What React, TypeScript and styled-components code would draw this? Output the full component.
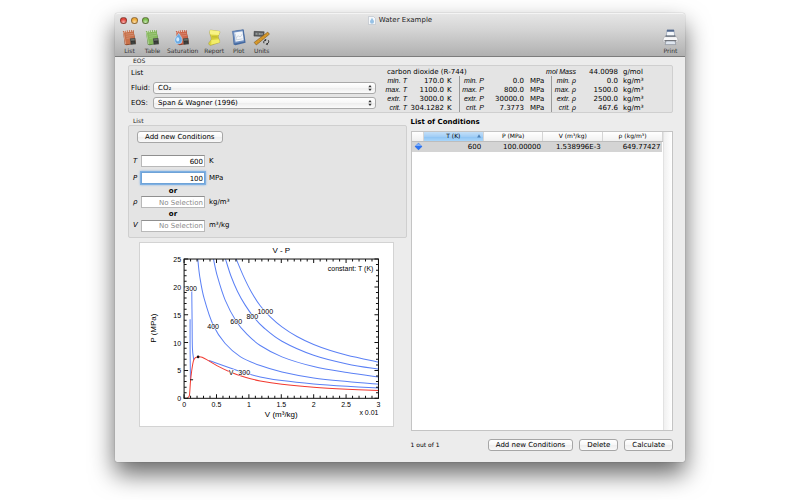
import React from "react";
import styled, { createGlobalStyle, css } from "styled-components";

const GlobalStyle = createGlobalStyle`
  *, *::before, *::after { box-sizing: border-box; }
  body {
    margin: 0;
    background: #fff;
    color: #000;
    font: 7px/9px "DejaVu Sans", sans-serif;
  }
  button, input, select { font: inherit; color: inherit; margin: 0; }
`;

const Desktop = styled.div`
  display: flex;
  min-height: 100vh;
  padding: 13px 115px 38px;
  overflow: hidden;
`;

const Window = styled.div`
  flex: 1;
  min-width: 0;
  display: flex;
  flex-direction: column;
  background: #ececec;
  border-radius: 3px 3px 2px 2px;
  box-shadow: 0 12px 24px rgba(0, 0, 0, 0.6), 0 0 1px rgba(0, 0, 0, 0.5);
`;

const Chrome = styled.header`
  background: linear-gradient(#e6e6e6, #d3d3d3 40%, #b0b0b0);
  border-top: 1px solid #f4f4f4;
  border-bottom: 1px solid #7c7c7c;
  border-radius: 3px 3px 0 0;
`;

const TitleBar = styled.div`
  display: grid;
  grid-template-columns: 1fr auto 1fr;
  align-items: center;
  height: 13px;
  padding: 0 5px;
`;

const Lights = styled.div`
  display: flex;
  gap: 4px;
`;

const Light = styled.button<{ $tone: string }>`
  width: 7px;
  height: 7px;
  padding: 0;
  border: 1px solid rgba(60, 40, 30, 0.5);
  border-radius: 50%;
  background: radial-gradient(circle at 50% 85%, #fff9, transparent 60%), ${(p) => p.$tone};
`;

const Title = styled.h1`
  display: flex;
  align-items: center;
  gap: 3px;
  margin: 0;
  font-size: 7px;
  font-weight: 400;
  color: #222;
`;

const ToolBar = styled.nav`
  display: flex;
  gap: 6px;
  padding: 1px 6px 1px 6px;
`;

const Tool = styled.button<{ $end?: boolean }>`
  display: flex;
  flex-direction: column;
  align-items: center;
  min-width: 17px;
  padding: 0;
  border: 0;
  background: none;
  font-size: 6px;
  line-height: 8px;
  color: #333;
  svg { width: 17px; height: 19px; }
  ${(p) => p.$end && css`margin-left: auto;`}
`;

const Content = styled.main`
  flex: 1;
  display: flex;
  flex-direction: column;
  padding: 0 12px 11px 13px;
`;

const BoxLabel = styled.h2`
  margin: 0;
  padding-left: 5px;
  font-size: 6px;
  line-height: 8px;
  font-weight: 400;
  color: #222;
`;

const Box = styled.section`
  border: 1px solid #cfcfcf;
  border-radius: 2px;
  background: #e4e4e4;
`;

const EosBox = styled(Box)`
  display: flex;
  align-items: flex-start;
  gap: 4px;
  padding: 1px 3px 0 2px;
`;

const FluidForm = styled.div`
  flex: 1;
  display: flex;
  flex-direction: column;
  gap: 3px;
  padding-bottom: 3px;
`;

const Heading = styled.h3`
  margin: 0;
  font-size: 7px;
  line-height: 12px;
  font-weight: 400;
`;

const Field = styled.div`
  display: grid;
  grid-template-columns: 22px 1fr;
  align-items: center;
`;

const SelectWrap = styled.div`
  position: relative;
  display: flex;
`;

const Select = styled.select`
  width: 100%;
  height: 12px;
  padding: 0 4px;
  appearance: none;
  border: 1px solid #a9a9a9;
  border-radius: 3px;
  background: linear-gradient(#fff, #f6f6f6 50%, #ededed 51%, #fbfbfb);
`;

const SelectArrows = styled.svg`
  position: absolute;
  right: 4px;
  top: 3px;
  pointer-events: none;
`;

const Facts = styled.table`
  width: 289px;
  table-layout: fixed;
  border-collapse: collapse;
`;

const FactName = styled.th`
  padding: 0;
  height: 9px;
  text-align: right;
  font: italic 400 7px/9px "Liberation Sans", sans-serif;
`;

const FactTitle = styled.th`
  padding: 1px 0 0 7px;
  line-height: 8px;
  text-align: left;
  font-weight: 400;
  white-space: nowrap;
`;

const FactValue = styled.td`
  padding: 1px 0 0;
  line-height: 8px;
  text-align: right;
`;

const FactUnit = styled.td<{ $rule?: boolean; $inset: number }>`
  padding: 1px 0 0 ${(p) => p.$inset}px;
  line-height: 8px;
  ${(p) => p.$rule && css`border-right: 1px solid #999;`}
`;

const Columns = styled.div`
  flex: 1;
  display: grid;
  grid-template-columns: 278fr 262fr;
  gap: 4px;
  padding-top: 4px;
`;

const LeftColumn = styled.div`
  min-width: 0;
`;

const RightColumn = styled.div`
  min-width: 0;
  display: flex;
  flex-direction: column;
`;

const ConditionBox = styled(Box)`
  padding: 5px 4px 3px;
`;

const PushButton = styled.button`
  height: 12px;
  padding: 0 7px;
  border: 1px solid #a6a6a6;
  border-radius: 3px;
  background: linear-gradient(#fff, #f7f7f7 50%, #eee 51%, #f9f9f9);
  line-height: 10px;
  white-space: nowrap;
`;

const FormTop = styled.div`
  display: flex;
  padding: 0 0 12px 4px;
`;

const InputGrid = styled.div`
  display: grid;
  grid-template-columns: 8px 64px 1fr;
  grid-template-rows: 12px 22px 4px 18px 6px 17px;
  align-items: center;
`;

const Symbol = styled.label`
  grid-column: 1;
  font-style: italic;
`;

const Unit = styled.span`
  padding-left: 4px;
`;

const Or = styled.strong`
  grid-column: 2;
  text-align: center;
`;

const TextBox = styled.input<{ $active?: boolean }>`
  width: 100%;
  height: 12px;
  padding: 1px 1px 0;
  border: 1px solid #b9b9b9;
  border-top-color: #8f8f8f;
  border-radius: 0;
  outline: none;
  background: #fff;
  text-align: right;
  &::placeholder { color: #8a8a8a; opacity: 1; }
  ${(p) =>
    p.$active &&
    css`
      border-color: #6ea3d8;
      box-shadow: 0 0 0 1px #7fb0e2, 0 0 2px 1px #8ab8e6;
    `}
`;

const PlotPanel = styled.figure`
  margin: 4px 13px 0 11px;
  border: 1px solid #d3d3d3;
  background: #fff;
  svg { display: block; width: 100%; height: auto; }
`;

const ListTitle = styled.h2`
  margin: 0;
  font-size: 7px;
  line-height: 11px;
  font-weight: 700;
`;

const ListFrame = styled.div`
  flex: 1;
  display: grid;
  grid-template-columns: minmax(0, 1fr) 9px;
  margin-top: 3px;
  border: 1px solid #c4c4c4;
  background: #fff;
`;

const ScrollTrack = styled.div`
  border-left: 1px solid #e2e2e2;
  background: linear-gradient(90deg, #f0f0f0, #fff);
`;

const Conditions = styled.table`
  width: 100%;
  align-self: start;
  table-layout: fixed;
  border-collapse: collapse;
`;

const MarkerColumn = styled.col`
  width: 12px;
`;

const HeadCell = styled.th<{ $sorted?: boolean }>`
  position: relative;
  height: 9px;
  padding: 0;
  border-right: 1px solid #d5d5d5;
  border-bottom: 1px solid #bdbdbd;
  background: ${(p) =>
    p.$sorted ? "linear-gradient(#c3dff8, #a3cef5 50%, #8cc2f3 51%, #a9d6fa)" : "linear-gradient(#fff, #f0f0f0)"};
  font-size: 6px;
  line-height: 8px;
  font-weight: 400;
`;

const SortMark = styled.svg`
  position: absolute;
  right: 2px;
  top: 2px;
`;

const Cell = styled.td`
  height: 11px;
  padding: 1px 2px 0 0;
  background: #d4d4d4;
  text-align: right;
`;

const MarkerCell = styled(Cell)`
  padding: 0 0 0 2px;
  text-align: left;
  svg { display: block; }
`;

const Footer = styled.footer`
  display: flex;
  align-items: center;
  gap: 6px;
  margin-top: 8px;
`;

const Count = styled.span`
  margin-right: auto;
  font-size: 6px;
  line-height: 8px;
`;

const Notebook = ({ tone, edge, drop }: { tone: string; edge: string; drop?: boolean }) => (
  <svg viewBox="0 0 18 19" aria-hidden="true">
    <path d="M2 3 13 1.600l3 14.200L6 17.600 4 17z" fill={edge} />
    <path d="M2 3 13 1.600l2.400 13.600L4.600 17z" fill={tone} />
    <path d="M2.400 3.500 4.900 16.400" stroke="#fff" strokeOpacity=".45" strokeWidth=".8" />
    <path d="M4 2.200v2M6 2v2M8 1.700v2M10 1.500v2M12 1.200v2" stroke="#f3f3f3" strokeWidth=".8" />
    <path d="m5 6 8-.9M5.400 8.200l8-.9M5.800 10.400l4-.5" stroke="#fff" strokeOpacity=".3" strokeWidth=".7" />
    <path d="m9.400 10.600 5.700-.6.7 6.600-5.600.7z" fill="#4a4d4a" />
    <path d="m10.300 11.500 4-.4.1 1.300-4 .4z" fill="#6f776e" />
    <path d="m10.700 14 3.900-.4m-3.700 1.900 3.900-.4" stroke="#222" strokeDasharray=".9 .5" />
    {drop && (
      <>
        <path d="M5 5c2 3 3.600 5 3.600 7.400a3.900 3.900 0 0 1-7.800 0C.8 10 3.200 8 5 5z" fill="#68a9e4" stroke="#c9e2f7" strokeWidth=".6" />
        <ellipse cx="4" cy="11.500" rx="1.600" ry="2.200" fill="#e4f3ff" opacity=".85" />
      </>
    )}
  </svg>
);

const ReportIcon = () => (
  <svg viewBox="0 0 18 19" aria-hidden="true">
    <path d="m4.500 1.600 10 1.400c.8 2-1.600 3.600-1.500 5.600.1 2.400 2 3.400 1.400 6.200L4.600 18c-1.700-1-2-1.800-1.600-2.800.7-1.600 2.800-2.400 2.500-5C5.200 7.600 2.900 5 4.500 1.600z" fill="#dcd53f" stroke="#9d9633" strokeWidth=".5" />
    <path d="m4.500 1.600 10 1.400c.3 1.400-.5 2.600-.9 3.800L4.800 6.400C3.900 4.800 3.900 3.200 4.500 1.600z" fill="#f8f385" />
    <path d="m5.400 12.500 8-1.100c.9 1.100 1.200 2.200.9 3.300l-9 2.300c.6-1.200.5-3 .1-4.500z" fill="#f3ed68" />
    <path d="m6.200 8.400 5.900-.1m-5.700 1.700 5.900-.4" stroke="#b3a927" strokeWidth=".6" />
  </svg>
);

const PlotIcon = () => (
  <svg viewBox="0 0 18 19" aria-hidden="true">
    <path d="M3 3 14.500 1l2 14-10.800 2.700L3.800 17z" fill="#456ba3" />
    <path d="M2.400 2.900 13.800 1.200l1.600 12.900L4.600 16.200z" fill="#7292c3" stroke="#3c5e92" strokeWidth=".4" />
    <path d="m4.500 4.100 8.800-1.300 1.200 9.600-8.600 1.500z" fill="#f4f7fb" />
    <path d="M5.600 5.400 6.600 12l6.700-1.100M6.700 10.500c1-3 2-3 3-2.200s2 .4 3.100-2.400" fill="none" stroke="#a9b6c8" strokeWidth=".6" />
  </svg>
);

const UnitsIcon = () => (
  <svg viewBox="0 0 18 19" aria-hidden="true">
    <path d="m1.200 3 10.600.4-.4 5L1 8z" fill="#5c5e60" stroke="#333" strokeWidth=".5" />
    <path d="m2.800 4.500 7.400.3-.2 2-7.300-.3z" fill="#a4a9a8" />
    <path d="M4.500 4.600v2M6 4.700v2M8.500 4.700v2" stroke="#393939" strokeWidth=".6" />
    <path d="M15.600 3.800 17.400 6 3.500 17.400l-2.300-2.700z" fill="#d99a2b" stroke="#73501a" strokeWidth=".6" />
    <path d="m14 6.200.8 1M11.600 8.200l.8 1M9.200 10.200l.8 1M6.800 12.100l.8 1M4.400 14l.8 1" stroke="#a3701d" strokeWidth=".5" />
    <path d="M11.600 15.600c-.7-1.800.2-3 1.500-3.400M16.200 12.400c1 1.800 0 3.400-1.400 3.800" fill="none" stroke="#222" />
    <path d="m12.400 11 2.100 1-1.700 1.600zM15.600 17.600l-2.200-1 1.800-1.600z" fill="#222" />
  </svg>
);

const PrintIcon = () => (
  <svg viewBox="0 0 18 19" aria-hidden="true">
    <path d="M5.300 1.600h7.400l.8 7h-9z" fill="#f5f8fb" stroke="#6e7f99" strokeWidth=".5" />
    <path d="M5.300 1.400h7.400l.1 2H5.200z" fill="#52698f" />
    <path d="M4 7.400h10l.4 1.600H3.600z" fill="#3e4a5c" />
    <path d="M3 8.600h12c1.300.8 1.800 2.300 1.800 4.800 0 .8-.5 1.200-1.200 1.200H2.400c-.7 0-1.200-.4-1.200-1.200C1.200 10.900 1.700 9.400 3 8.600z" fill="#f7f7f8" stroke="#9a9a9e" strokeWidth=".5" />
    <path d="M2.500 12.400h13l-.4 1.400H2.900z" fill="#4c4e55" />
    <path d="m4.300 13.200-.9 3.800h11.200l-.9-3.800z" fill="#dfe6ef" stroke="#6c7480" strokeWidth=".5" />
  </svg>
);

const DocIcon = () => (
  <svg width="8" height="9" viewBox="0 0 8 9" aria-hidden="true">
    <path d="M.5.5h5l2 2v6h-7z" fill="#f5f8fb" stroke="#b6bcc4" strokeWidth=".6" />
    <path d="M4 1.800C5 3.600 6 4.400 6 5.700a2 2 0 0 1-4 0c0-1.300 1-2.100 2-3.900z" fill="#96c1e5" />
  </svg>
);

const tools = [
  { name: "List", icon: <Notebook tone="#c8714a" edge="#8c4527" /> },
  { name: "Table", icon: <Notebook tone="#86b95c" edge="#56823a" /> },
  { name: "Saturation", icon: <Notebook tone="#cd6549" edge="#8e3c28" drop /> },
  { name: "Report", icon: <ReportIcon /> },
  { name: "Plot", icon: <PlotIcon /> },
  { name: "Units", icon: <UnitsIcon /> },
];

const limits = [
  ["min.", "170.0", "0.0", "0.0"],
  ["max.", "1100.0", "800.0", "1500.0"],
  ["extr.", "3000.0", "30000.0", "2500.0"],
  ["crit.", "304.1282", "7.3773", "467.6"],
];

/* Chart geometry. Curve points are kept on a grid three times finer than the drawing. */
const LEFT = 44;
const RIGHT = 238;
const TOP = 16;
const BOTTOM = 155;

type Point = [number, number];

const isotherms: Point[][] = [
  [[203, 72], [209, 125], [222, 190], [250, 272], [285, 325], [330, 364], [390, 391], [455, 410], [550, 428], [650, 439], [745, 447]],
  [[250, 72], [262, 125], [285, 195], [318, 258], [350, 297], [390, 331], [455, 365], [550, 394], [650, 412], [745, 425]],
  [[286, 72], [302, 122], [322, 169], [345, 210], [370, 245], [400, 277], [455, 318], [550, 360], [650, 386], [745, 402]],
  [[318, 72], [340, 124], [363, 170], [390, 212], [420, 245], [455, 275], [500, 304], [550, 328], [600, 346], [650, 360], [745, 381]],
  [[237, 376], [300, 398], [345, 413], [390, 425], [455, 436], [550, 446], [650, 453], [745, 458]],
  [[180, 252], [180, 340], [181, 435]],
  [[185, 168], [186, 260], [187, 340], [191, 374]],
];

const dome: Point[] = [
  [172, 487], [178, 480], [181, 440], [185, 405], [190, 377], [196, 367], [204, 365], [216, 366],
  [235, 376], [260, 391], [300, 410], [345, 426], [390, 437], [455, 447], [550, 456], [650, 462], [745, 466],
];

const smooth = (grid: Point[]) => {
  const pts = grid.map(([x, y]): Point => [x / 3 - 10, y / 3 - 8]);
  let d = `M${pts[0][0]} ${pts[0][1]}`;
  for (let i = 0; i < pts.length - 1; i++) {
    const a = pts[i - 1] ?? pts[i];
    const b = pts[i];
    const c = pts[i + 1];
    const e = pts[i + 2] ?? c;
    d += `C${b[0] + (c[0] - a[0]) / 6} ${b[1] + (c[1] - a[1]) / 6} ${c[0] - (e[0] - b[0]) / 6} ${c[1] - (e[1] - b[1]) / 6} ${c[0]} ${c[1]}`;
  }
  return d;
};

const ticks = () => {
  let d = "";
  for (let i = 0; i <= 30; i++) {
    const x = LEFT + (i * (RIGHT - LEFT)) / 30;
    const len = i % 5 === 0 ? 4 : 2.5;
    d += `M${x} ${TOP}v${len}M${x} ${BOTTOM}v${-len}`;
  }
  for (let i = 0; i <= 25; i++) {
    const y = BOTTOM - (i * (BOTTOM - TOP)) / 25;
    const len = i % 5 === 0 ? 4 : 2.5;
    d += `M${LEFT} ${y}h${len}M${RIGHT} ${y}h${-len}`;
  }
  return d;
};

const curveLabels: [string, number, number][] = [
  ["300", 51, 48], ["400", 73, 86], ["600", 96, 81], ["800", 112, 76], ["1000", 125, 71], ["V", 91, 132], ["300", 104, 132],
];

const Chart = () => (
  <svg viewBox="0 0 252 183" role="img" aria-label="V - P" fontFamily="Liberation Sans, sans-serif" fontSize="7" textAnchor="middle">
    <text x="141" y="10" fontSize="8">V - P</text>
    {isotherms.map((c, i) => (
      <path key={i} d={smooth(c)} fill="none" stroke="#5b80f5" strokeWidth="1" />
    ))}
    <path d={smooth(dome)} fill="none" stroke="#f23a30" strokeWidth="1" />
    <path d={ticks()} stroke="#111" strokeWidth="1" />
    <rect x={LEFT} y={TOP} width={RIGHT - LEFT} height={BOTTOM - TOP} fill="none" stroke="#111" />
    <circle cx="58" cy="113.700" r="1.300" fill="#111" />
    <path d="M50 136.500h3" stroke="#111" />
    {curveLabels.map(([t, x, y]) => (
      <text key={`${t}-${x}`} x={x} y={y} stroke="#fff" strokeWidth="1" paintOrder="stroke" fill="#000">{t}</text>
    ))}
    <text x="233" y="28" textAnchor="end">constant: T (K)</text>
    {[0, 5, 10, 15, 20, 25].map((v) => (
      <text key={v} x="41" y={BOTTOM + 3 - (v * (BOTTOM - TOP)) / 25} textAnchor="end">{v}</text>
    ))}
    {["0", "0.5", "1", "1.5", "2", "2.5", "3"].map((v, i) => (
      <text key={v} x={LEFT + (i * (RIGHT - LEFT)) / 6} y="164">{v}</text>
    ))}
    <text x="141" y="174" fontSize="8">V (m³/kg)</text>
    <text x="238" y="172" textAnchor="end">x 0.01</text>
    <text x="16" y="85" fontSize="8" transform="rotate(-90 16 85)">P (MPa)</text>
  </svg>
);

const PopUp = ({ id, value }: { id: string; value: string }) => (
  <SelectWrap>
    <Select id={id} defaultValue={value}>
      <option>{value}</option>
    </Select>
    <SelectArrows width="4" height="6" viewBox="0 0 4 6" aria-hidden="true">
      <path d="M2 0 3.700 2.300H.3zM2 6 .3 3.700h3.400z" fill="#333" />
    </SelectArrows>
  </SelectWrap>
);

export default function App() {
  return (
    <>
      <GlobalStyle />
      <Desktop>
        <Window>
          <Chrome>
            <TitleBar>
              <Lights>
                <Light $tone="#e4483f" aria-label="Close" />
                <Light $tone="#f0ae3c" aria-label="Minimize" />
                <Light $tone="#7cc04e" aria-label="Zoom" />
              </Lights>
              <Title><DocIcon />Water Example</Title>
            </TitleBar>
            <ToolBar>
              {tools.map((t) => (
                <Tool key={t.name}>{t.icon}{t.name}</Tool>
              ))}
              <Tool $end><PrintIcon />Print</Tool>
            </ToolBar>
          </Chrome>
          <Content>
            <BoxLabel>EOS</BoxLabel>
            <EosBox>
              <FluidForm>
                <Heading>List</Heading>
                <Field>
                  <label htmlFor="fluid">Fluid:</label>
                  <PopUp id="fluid" value="CO₂" />
                </Field>
                <Field>
                  <label htmlFor="eos">EOS:</label>
                  <PopUp id="eos" value="Span &amp; Wagner (1996)" />
                </Field>
              </FluidForm>
              <Facts>
                <colgroup>
                  {[27, 37, 16, 24, 40, 28, 24, 42, 51].map((w, i) => (
                    <col key={i} width={w} />
                  ))}
                </colgroup>
                <tbody>
                  <tr>
                    <FactTitle colSpan={5}>carbon dioxide (R-744)</FactTitle>
                    <FactName colSpan={2}>mol Mass</FactName>
                    <FactValue>44.0098</FactValue>
                    <FactUnit $inset={5}>g/mol</FactUnit>
                  </tr>
                  {limits.map(([k, t, p, r]) => (
                    <tr key={k}>
                      <FactName>{k} T</FactName>
                      <FactValue>{t}</FactValue>
                      <FactUnit $rule $inset={3}>K</FactUnit>
                      <FactName>{k} P</FactName>
                      <FactValue>{p}</FactValue>
                      <FactUnit $rule $inset={6}>MPa</FactUnit>
                      <FactName>{k} ρ</FactName>
                      <FactValue>{r}</FactValue>
                      <FactUnit $inset={5}>kg/m³</FactUnit>
                    </tr>
                  ))}
                </tbody>
              </Facts>
            </EosBox>
            <Columns>
              <LeftColumn>
                <BoxLabel>List</BoxLabel>
                <ConditionBox>
                  <FormTop>
                    <PushButton>Add new Conditions</PushButton>
                  </FormTop>
                  <InputGrid>
                    <Symbol htmlFor="t">T</Symbol>
                    <TextBox id="t" defaultValue="600" />
                    <Unit>K</Unit>
                    <Symbol htmlFor="p">P</Symbol>
                    <TextBox id="p" defaultValue="100" $active />
                    <Unit>MPa</Unit>
                    <Or>or</Or>
                    <Symbol htmlFor="rho">ρ</Symbol>
                    <TextBox id="rho" placeholder="No Selection" />
                    <Unit>kg/m³</Unit>
                    <Or>or</Or>
                    <Symbol htmlFor="v">V</Symbol>
                    <TextBox id="v" placeholder="No Selection" />
                    <Unit>m³/kg</Unit>
                  </InputGrid>
                </ConditionBox>
                <PlotPanel><Chart /></PlotPanel>
              </LeftColumn>
              <RightColumn>
                <ListTitle>List of Conditions</ListTitle>
                <ListFrame>
                  <Conditions>
                    <colgroup>
                      <MarkerColumn />
                      <col span={4} />
                    </colgroup>
                    <thead>
                      <tr>
                        <HeadCell aria-label="Status" />
                        <HeadCell $sorted>
                          T (K)
                          <SortMark width="4" height="4" viewBox="0 0 4 4" aria-hidden="true">
                            <path d="M2 .3 3.900 3.500H.1z" fill="#4b7fb5" />
                          </SortMark>
                        </HeadCell>
                        <HeadCell>P (MPa)</HeadCell>
                        <HeadCell>V (m³/kg)</HeadCell>
                        <HeadCell>ρ (kg/m³)</HeadCell>
                      </tr>
                    </thead>
                    <tbody>
                      <tr>
                        <MarkerCell>
                          <svg width="9" height="9" viewBox="0 0 9 9" aria-hidden="true">
                            <path d="M4.500.7 8.300 4.500 4.500 8.300.7 4.500z" fill="#2f74f0" />
                            <path d="M4.500 1.200 7.400 4H1.600z" fill="#7fb0fa" />
                          </svg>
                        </MarkerCell>
                        <Cell>600</Cell>
                        <Cell>100.00000</Cell>
                        <Cell>1.538996E-3</Cell>
                        <Cell>649.77427</Cell>
                      </tr>
                    </tbody>
                  </Conditions>
                  <ScrollTrack />
                </ListFrame>
                <Footer>
                  <Count>1 out of 1</Count>
                  <PushButton>Add new Conditions</PushButton>
                  <PushButton>Delete</PushButton>
                  <PushButton>Calculate</PushButton>
                </Footer>
              </RightColumn>
            </Columns>
          </Content>
        </Window>
      </Desktop>
    </>
  );
}
